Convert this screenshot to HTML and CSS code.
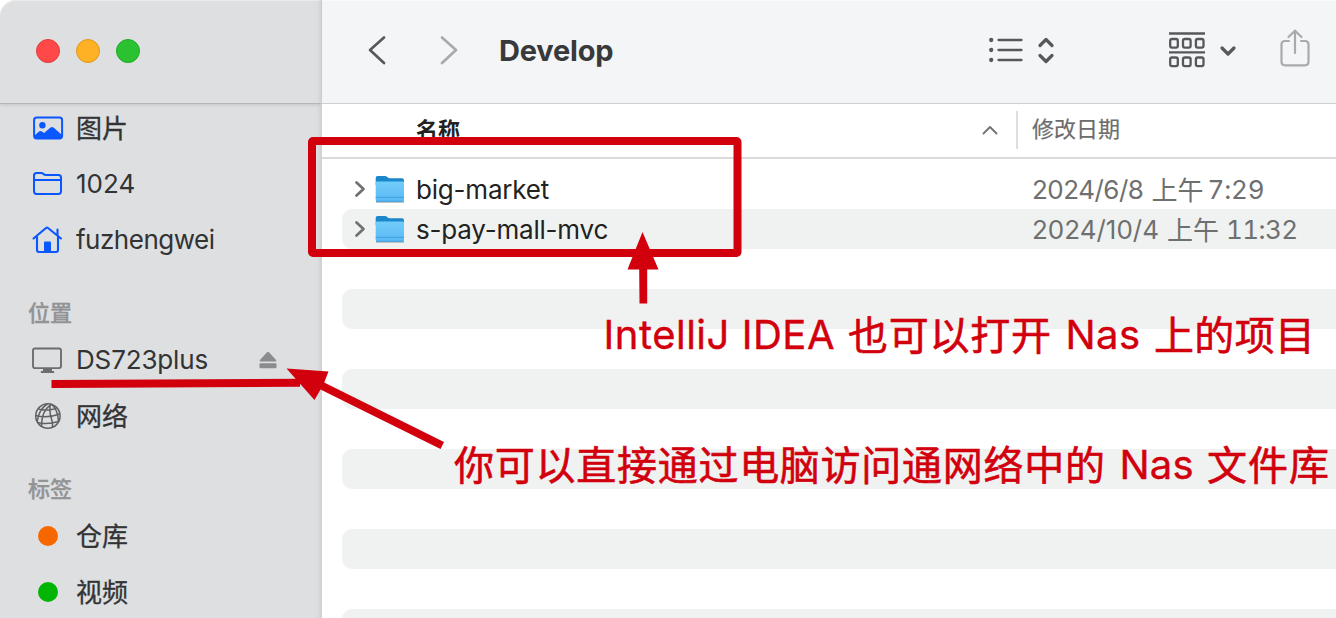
FILE: index.html
```html
<!DOCTYPE html>
<html lang="zh-CN">
<head>
<meta charset="utf-8">
<title>Develop</title>
<link rel="stylesheet" href="styles.css">
</head>
<body>
<div class="window">
  <aside class="sidebar">
    <div class="controls"><i class="light close"></i><i class="light minimize"></i><i class="light zoom"></i></div>
    <nav class="places">
      <div class="item"><svg class="icon" viewBox="0 0 32 32"><rect x="2.1" y="5.4" width="28" height="21" rx="2.6" fill="none" stroke="#0a57ff" stroke-width="2"/><circle cx="10.4" cy="13.2" r="3.2" fill="#0a57ff"/><path d="M2 24 7 19.500Q8.500 18.400 10 19.500L12 21 18.500 15.600Q20 14.500 21.500 15.600L30 23V25Q30 27 28 27H4Q2 27 2 25Z" fill="#0a57ff"/></svg><span class="cjk">图片</span></div>
      <div class="item"><svg class="icon" viewBox="0 0 32 32" fill="none" stroke="#0a57ff" stroke-width="2"><path d="M2 23V7.500Q2 5 4.500 5H9Q10.500 5 11.500 6T14 7H26.500Q29 7 29 9.500V23Q29 26 26.500 26H4.500Q2 26 2 23ZM2 12H29"/></svg><span class="t-num">1024</span></div>
      <div class="item"><svg class="icon" viewBox="0 0 32 32"><path d="M1.500 14.500 14 4Q15 3 16 4L29 14.500M5 13V26Q5 28 7 28H24Q26 28 26 26V12.500M25.500 5.500V11" fill="none" stroke="#0a57ff" stroke-width="2.1" stroke-linecap="round"/><path d="M12 28V18.500Q12 17.500 13 17.500H18Q19 17.500 19 18.500V28Z" fill="#0a57ff"/></svg><span class="t-home">fuzhengwei</span></div>
      <div class="group">位置</div>
      <div class="item"><svg class="icon" viewBox="0 0 32 32"><rect x="1" y="4.500" width="28" height="19.600" rx="2" fill="none" stroke="#6c6d6f" stroke-width="1.9"/><path d="M11 24H20V27H22Q23 29 21.500 29H9.500Q8 29 9 27H11Z" fill="#6c6d6f"/></svg><span class="t-nas">DS723plus</span><svg class="eject" viewBox="0 0 18 18"><path d="M8 1.200Q9 .2 10 1.200L17 9Q18 10.400 16.500 10.500H1.500Q0 10.400 1 9Z" fill="#8b8c8e"/><rect x=".5" y="12.300" width="17" height="5" rx="1" fill="#8b8c8e"/></svg></div>
      <div class="item"><svg class="icon" viewBox="0 0 32 32" fill="none" stroke="#606163" stroke-width="1.500"><circle cx="15.900" cy="16" r="12.200"/><path d="M19 4.300Q9.500 11 9.500 26M15.500 4Q7 8.500 5.200 21.500M18.500 4Q17 10 19 17T20.500 27M19 4Q26 9 26.500 22M6.500 8.800Q12 11.500 24.500 8.500M3.800 15.500Q15 18.500 28 14M5.500 22.500Q15 24.800 26.500 21.500"/></svg><span class="cjk">网络</span></div>
      <div class="group">标签</div>
      <div class="item"><i class="tag orange"></i><span class="cjk">仓库</span></div>
      <div class="item"><i class="tag green"></i><span class="cjk">视频</span></div>
    </nav>
  </aside>
  <main class="browser">
    <header class="toolbar">
      <svg class="nav" viewBox="0 0 92 30" fill="none" stroke-width="2.700" stroke-linecap="round" stroke-linejoin="round"><path d="M16 2.500 2 15 16 28" stroke="#58595b"/><path d="M74 2.500 88 15 74 28" stroke="#a9aaac"/></svg>
      <h1 class="title">Develop</h1>
      <svg class="view" viewBox="0 0 68 30" fill="none" stroke="#57585a" stroke-linecap="round" stroke-linejoin="round"><path d="M10.500 5H33.500M10.500 15H33.500M10.500 25H33.500" stroke-width="2.300"/><path d="M3.200 5h.01M3.200 15h.01M3.200 25h.01" stroke-width="4.300"/><path d="M52 10.500 58 4.500 64 10.500M52 20.500 58 26.500 64 20.500" stroke-width="3.200"/></svg>
      <svg class="arrange" viewBox="0 0 70 38" fill="none" stroke="#57585a"><path d="M1 3.500H37M1 22.300H37" stroke-width="2.300"/><g stroke-width="2.300"><rect x="2.200" y="9" width="7.600" height="8.600" rx="1.800"/><rect x="15" y="9" width="7.600" height="8.600" rx="1.800"/><rect x="27.900" y="9" width="7.600" height="8.600" rx="1.800"/><rect x="2.200" y="27.500" width="7.600" height="8.600" rx="1.800"/><rect x="15" y="27.500" width="7.600" height="8.600" rx="1.800"/><rect x="27.900" y="27.500" width="7.600" height="8.600" rx="1.800"/></g><path d="M54 18 60 24 66 18" stroke-width="3.200" stroke-linecap="round" stroke-linejoin="round"/></svg>
      <svg class="share" viewBox="0 0 30 38" fill="none" stroke="#a9aaac" stroke-width="2.200" stroke-linecap="round"><path d="M9 12H5Q1.500 12 1.500 15.500V32.500Q1.500 36.300 5 36.300H25Q28.500 36.300 28.500 32.500V15.500Q28.500 12 25 12H21M15 24V2M8.500 8 15 1.700 21.500 8"/></svg>
    </header>
    <div class="columns">
      <span class="col-name">名称</span>
      <svg class="sort" viewBox="0 0 16 10"><path d="M1.500 8.500 8 2 14.500 8.500" fill="none" stroke="#727272" stroke-width="1.800" stroke-linecap="round" stroke-linejoin="round"/></svg>
      <span class="col-date">修改日期</span>
    </div>
    <div class="rows">
      <div class="row">
        <svg class="chevron" viewBox="0 0 12 18"><path d="M2.500 2.500 9.500 9 2.500 15.500" fill="none" stroke="#707070" stroke-width="2.700" stroke-linecap="round" stroke-linejoin="round"/></svg>
        <svg class="folder" viewBox="0 0 32 32"><defs><linearGradient id="face" x2="0" y2="1"><stop stop-color="#72ccfb"/><stop offset="1" stop-color="#5ab9f4"/></linearGradient></defs><path d="M2 28H30V30H2Z" fill="#bcc3c7"/><path d="M1.700 5Q1.700 3 3.700 3H10.500Q12.500 3 13.500 4.200T16.500 5.300H28Q30 5.300 30 7.300V12H1.700Z" fill="#1a87cb"/><path d="M1.700 9.500Q1.700 8.500 3 8.500H29Q30 8.500 30 9.500V27Q30 28.500 28.500 28.500H3.200Q1.700 28.500 1.700 27Z" fill="url(#face)"/><path d="M1.700 24.300H30M2.200 28.300H29.500" stroke="#389cdd" stroke-width=".9"/></svg>
        <span class="file f1">big-market</span><span class="date"><span class="day d1">2024/6/8</span><span class="noon">上午</span><span class="time">7:29</span></span>
      </div>
      <div class="row alt">
        <svg class="chevron" viewBox="0 0 12 18"><path d="M2.500 2.500 9.500 9 2.500 15.500" fill="none" stroke="#707070" stroke-width="2.700" stroke-linecap="round" stroke-linejoin="round"/></svg>
        <svg class="folder" viewBox="0 0 32 32"><path d="M2 28H30V30H2Z" fill="#bcc3c7"/><path d="M1.700 5Q1.700 3 3.700 3H10.500Q12.500 3 13.500 4.200T16.500 5.300H28Q30 5.300 30 7.300V12H1.700Z" fill="#1a87cb"/><path d="M1.700 9.500Q1.700 8.500 3 8.500H29Q30 8.500 30 9.500V27Q30 28.500 28.500 28.500H3.200Q1.700 28.500 1.700 27Z" fill="url(#face)"/><path d="M1.700 24.300H30M2.200 28.300H29.500" stroke="#389cdd" stroke-width=".9"/></svg>
        <span class="file f2">s-pay-mall-mvc</span><span class="date"><span class="day d2">2024/10/4</span><span class="noon">上午</span><span class="time late">11:32</span></span>
      </div>
      <div class="row"></div><div class="row alt"></div>
      <div class="row"></div><div class="row alt"></div>
      <div class="row"></div><div class="row alt"></div>
      <div class="row"></div><div class="row alt"></div>
      <div class="row"></div><div class="row alt"></div>
    </div>
  </main>
  <svg class="notes" viewBox="0 0 1336 618">
    <rect x="312" y="141" width="425.500" height="112" rx="1" fill="none" stroke="#d2000d" stroke-width="8" stroke-linejoin="round"/>
    <path d="M642.500 232 658.500 269.500H647.200V303.500H639.500L639.200 269.500H627.500Z"/>
    <path d="M51.500 380 300 378.700V386.700L51.500 388Z"/>
    <path d="M286.500 368.500 328.500 371.500 324.200 382.500 444 442 440.500 449 320.500 389.500 314.500 400Z"/>
    <text x="603.500" y="349" textLength="231">IntelliJ IDEA</text>
    <text class="han" x="848" y="349.500" textLength="203">也可以打开</text>
    <text x="1065.500" y="349" textLength="74.500">Nas</text>
    <text class="han" x="1154" y="349.500" textLength="161">上的项目</text>
    <text class="han" x="454" y="479.500" textLength="651">你可以直接通过电脑访问通网络中的</text>
    <text x="1119.500" y="479" textLength="74">Nas</text>
    <text class="han" x="1207" y="479.500" textLength="122">文件库</text>
  </svg>
</div>
</body>
</html>
```
FILE: styles.css
```css
* { box-sizing: border-box; }
body { margin: 0; background: #fff; font-family: Inter, "Noto Sans CJK SC", sans-serif; color: #323334; }
.window { position: relative; display: flex; width: 1336px; height: 618px; overflow: hidden; }
.sidebar { width: 322px; flex: none; background: #dedfe1; border-right: 1px solid #d0d1d3; border-top-left-radius: 16px; box-shadow: inset -4px 0 4px -3px #cbcccf, inset 0 1px #eeeeef; }
.controls { height: 104px; padding: 39px 0 0 36px; display: flex; gap: 16px; border-bottom: 1px solid #b5b6b8; box-shadow: 0 1px 3px #c4c5c8; }
.light { width: 24px; height: 24px; border-radius: 50%; }
.close { background: #ff4848; border: 1px solid #e33b3d; }
.minimize { background: #ffb126; border: 1px solid #e29a1c; }
.zoom { background: #2ac231; border: 1px solid #1dac25; }
.item { height: 48px; margin-bottom: 8px; padding-left: 32px; display: flex; align-items: center; font-size: 26px; line-height: 32px; white-space: nowrap; }
.icon { width: 32px; height: 32px; margin-right: 12px; flex: none; }
.cjk { font-family: "Noto Sans CJK SC", sans-serif; padding-bottom: 3px; -webkit-text-stroke: .3px; }
.t-num { letter-spacing: 0; }
.t-home { letter-spacing: -.5px; }
.t-nas { width: 182px; letter-spacing: -.15px; }
.eject { width: 18px; height: 18px; margin-left: .5px; }
.group { height: 64px; padding: 24px 0 0 28px; font: 500 22px/30px "Noto Sans CJK SC", sans-serif; color: #929395; -webkit-text-stroke: .3px; }
.tag { width: 20px; height: 20px; margin: 0 18px 0 6px; border-radius: 50%; }
.orange { background: #f76700; }
.green { background: #05b505; }
.browser { flex: 1; min-width: 0; background: #fff; }
.toolbar { height: 104px; display: flex; align-items: center; padding-bottom: 4px; background: #f4f5f7; border-bottom: 1px solid #cfcfd1; box-shadow: inset 0 1px #fafafa; }
.nav { width: 92px; height: 30px; margin-left: 46px; }
.title { width: 489px; margin: 2px 0 0 39px; font-size: 29px; line-height: 36px; font-weight: 700; letter-spacing: -.2px; color: #38393a; }
.view { width: 68px; height: 30px; }
.arrange { width: 70px; height: 38px; margin: -2px 0 0 112px; }
.share { width: 30px; height: 38px; margin: -3px 0 0 42px; }
.columns { height: 55px; padding: 0 0 2px 94px; display: flex; align-items: center; border-bottom: 2px solid #dadada; font: 22px/30px "Noto Sans CJK SC", sans-serif; }
.col-name { width: 566px; padding-bottom: 4px; font-weight: 700; color: #222; }
.sort { width: 16px; height: 10px; margin-right: 18px; }
.col-date { height: 38px; padding-left: 14px; line-height: 33px; border-left: 2px solid #dedede; color: #6d6d6d; -webkit-text-stroke: .2px; }
.rows { padding: 10px 0 0 20px; }
.row { height: 40px; display: flex; align-items: center; border-radius: 10px 0 0 10px; font-size: 26px; white-space: nowrap; color: #222; }
.alt { background: #f0f2f1; }
.chevron { width: 12px; height: 18px; margin: 0 20px 0 12px; }
.folder { width: 32px; height: 32px; margin: 0 10px 0 -12px; }
.file { width: 616px; line-height: 32px; padding-top: 2px; }
.f1 { letter-spacing: -.2px; }
.f2 { letter-spacing: -.2px; }
.date { display: flex; padding-top: 2px; line-height: 32px; color: #6e6f6f; }
.day { margin-right: 8px; }
.d1 { letter-spacing: -.5px; }
.noon { font-family: "Noto Sans CJK SC", sans-serif; line-height: 30px; }
.time { margin-left: 4px; letter-spacing: -.1px; font-variant-numeric: tabular-nums; }
.late { margin-left: 7px; letter-spacing: -.6px; }
.notes { position: absolute; left: 0; top: 0; width: 1336px; height: 618px; fill: #d2000d; }
.notes text { font-family: Inter, sans-serif; font-size: 40px; stroke: #d2000d; stroke-width: .4px; }
.notes .han { font-family: "Noto Sans CJK SC", sans-serif; stroke-width: .6px; }
```
